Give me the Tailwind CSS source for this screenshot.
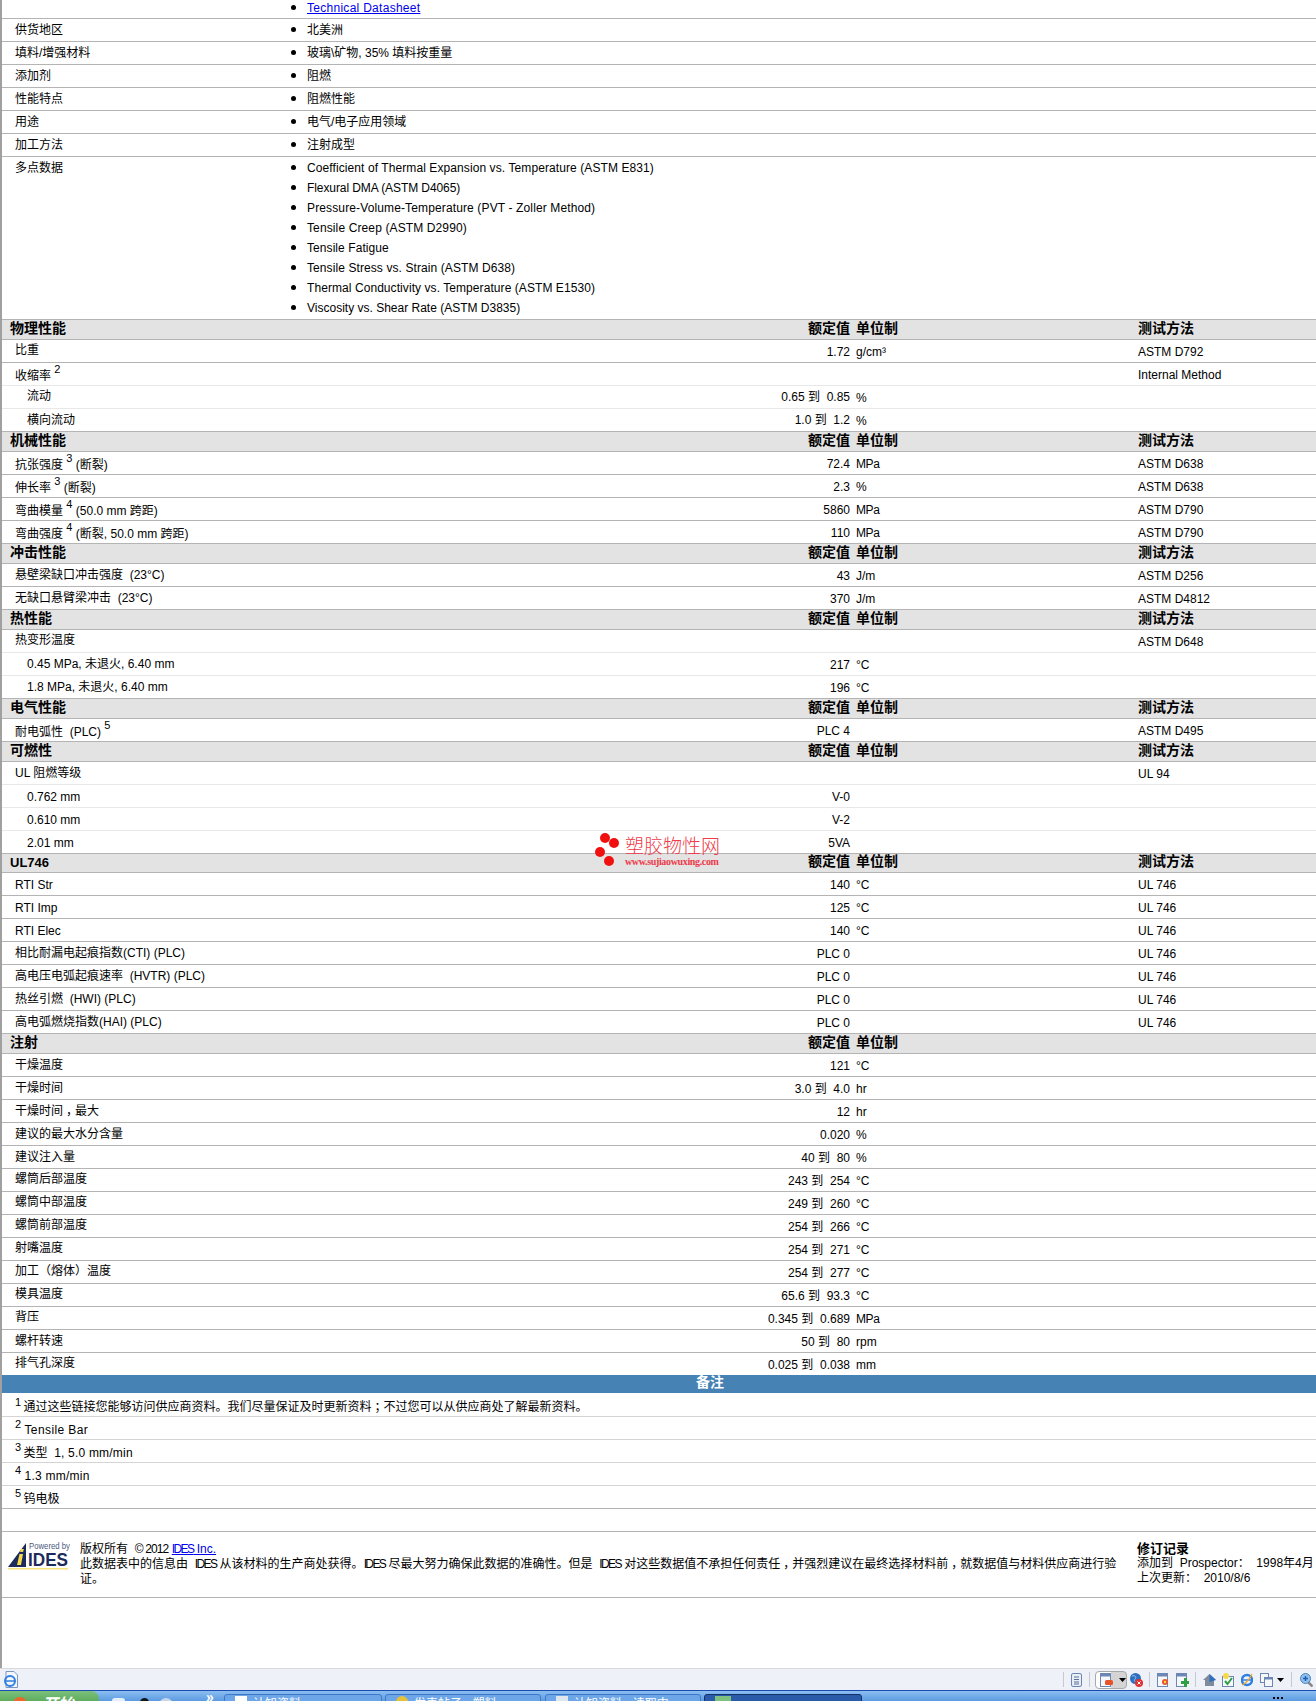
<!DOCTYPE html>
<html lang="zh">
<head>
<meta charset="utf-8">
<title>Datasheet</title>
<script src="https://cdn.jsdelivr.net/npm/@tailwindcss/browser@4"></script>
</head>
<body class="bg-white">
<div class="relative h-[1701px] w-[1316px] overflow-hidden bg-white font-['Liberation_Sans','Noto_Sans_CJK_SC',sans-serif] text-[12px] leading-[16px] text-black">
  <div class="h-[1668px] overflow-hidden border-l-2 border-[#a0a0a0]">
    <div class="w-[1416px]">
      <!-- info rows -->
      <div class="grid h-[19px] grid-cols-[290px_1fr] border-b border-[#b4b4b4]"><div></div><ul class="-mt-[1px] list-disc pl-[15px] marker:text-[15px]"><li><a class="text-[#0000ee] underline tracking-[0.28px]">Technical Datasheet</a></li></ul></div>
      <div class="grid h-[23px] grid-cols-[290px_1fr] border-b border-[#b4b4b4]"><div class="pl-[13px] pt-[3px]">供货地区</div><ul class="list-disc pl-[15px] pt-[2px] marker:text-[15px]"><li>北美洲</li></ul></div>
      <div class="grid h-[23px] grid-cols-[290px_1fr] border-b border-[#b4b4b4]"><div class="pl-[13px] pt-[3px]">填料/增强材料</div><ul class="list-disc pl-[15px] pt-[2px] marker:text-[15px]"><li>玻璃\矿物, 35% 填料按重量</li></ul></div>
      <div class="grid h-[23px] grid-cols-[290px_1fr] border-b border-[#b4b4b4]"><div class="pl-[13px] pt-[3px]">添加剂</div><ul class="list-disc pl-[15px] pt-[2px] marker:text-[15px]"><li>阻燃</li></ul></div>
      <div class="grid h-[23px] grid-cols-[290px_1fr] border-b border-[#b4b4b4]"><div class="pl-[13px] pt-[3px]">性能特点</div><ul class="list-disc pl-[15px] pt-[2px] marker:text-[15px]"><li>阻燃性能</li></ul></div>
      <div class="grid h-[23px] grid-cols-[290px_1fr] border-b border-[#b4b4b4]"><div class="pl-[13px] pt-[3px]">用途</div><ul class="list-disc pl-[15px] pt-[2px] marker:text-[15px]"><li>电气/电子应用领域</li></ul></div>
      <div class="grid h-[23px] grid-cols-[290px_1fr] border-b border-[#b4b4b4]"><div class="pl-[13px] pt-[3px]">加工方法</div><ul class="list-disc pl-[15px] pt-[2px] marker:text-[15px]"><li>注射成型</li></ul></div>
      <div class="grid h-[163px] grid-cols-[290px_1fr] border-b border-[#b4b4b4]"><div class="pl-[13px] pt-[3px]">多点数据</div>
        <ul class="list-disc pl-[15px] leading-[20px] marker:text-[15px]">
          <li class="h-[20px] tracking-[0.09px]">Coefficient of Thermal Expansion vs. Temperature (ASTM E831)</li>
          <li class="h-[20px] tracking-[-0.09px]">Flexural DMA (ASTM D4065)</li>
          <li class="h-[20px] tracking-[0.13px]">Pressure-Volume-Temperature (PVT - Zoller Method)</li>
          <li class="h-[20px] tracking-[0.12px]">Tensile Creep (ASTM D2990)</li>
          <li class="h-[20px] tracking-[0.07px]">Tensile Fatigue</li>
          <li class="h-[20px] tracking-[0.09px]">Tensile Stress vs. Strain (ASTM D638)</li>
          <li class="h-[20px] tracking-[0.07px]">Thermal Conductivity vs. Temperature (ASTM E1530)</li>
          <li class="h-[20px]">Viscosity vs. Shear Rate (ASTM D3835)</li>
        </ul>
      </div>

      <!-- 物理性能 -->
      <div class="grid h-[20px] grid-cols-[290px_558px_288px_1fr] border-b border-[#b4b4b4] bg-[#e3e3e3] text-[14px] font-bold"><div class="pl-[8px]">物理性能</div><div class="text-right">额定值</div><div class="pl-[6px]">单位制</div><div>测试方法</div></div>
      <div class="grid h-[23px] grid-cols-[290px_558px_288px_1fr] border-b border-[#b4b4b4]"><div class="pl-[13px] pt-[2px]">比重</div><div class="pt-[4px] text-right">1.72</div><div class="pl-[6px] pt-[4px]">g/cm³</div><div class="pt-[4px]">ASTM D792</div></div>
      <div class="grid h-[23px] grid-cols-[290px_558px_288px_1fr] border-b border-[#e8e8e8]"><div class="pl-[13px] pt-[5px]">收缩率 <sup class="top-[-7px] text-[11px]">2</sup></div><div></div><div></div><div class="pt-[4px]">Internal Method</div></div>
      <div class="grid h-[23px] grid-cols-[290px_558px_288px_1fr] border-b border-[#e8e8e8]"><div class="pl-[25px] pt-[2px]">流动</div><div class="pt-[3px] text-right">0.65 到&nbsp; 0.85</div><div class="pl-[6px] pt-[4px]">%</div><div></div></div>
      <div class="grid h-[23px] grid-cols-[290px_558px_288px_1fr] border-b border-[#b4b4b4]"><div class="pl-[25px] pt-[3px]">横向流动</div><div class="pt-[3px] text-right">1.0 到&nbsp; 1.2</div><div class="pl-[6px] pt-[4px]">%</div><div></div></div>

      <!-- 机械性能 -->
      <div class="grid h-[20px] grid-cols-[290px_558px_288px_1fr] border-b border-[#b4b4b4] bg-[#e3e3e3] text-[14px] font-bold"><div class="pl-[8px]">机械性能</div><div class="text-right">额定值</div><div class="pl-[6px]">单位制</div><div>测试方法</div></div>
      <div class="grid h-[23px] grid-cols-[290px_558px_288px_1fr] border-b border-[#b4b4b4]"><div class="pl-[13px] pt-[5px]">抗张强度 <sup class="top-[-7px] text-[11px]">3</sup> (断裂)</div><div class="pt-[4px] text-right">72.4</div><div class="pl-[6px] pt-[4px] tracking-[-0.4px]">MPa</div><div class="pt-[4px]">ASTM D638</div></div>
      <div class="grid h-[23px] grid-cols-[290px_558px_288px_1fr] border-b border-[#b4b4b4]"><div class="pl-[13px] pt-[5px]">伸长率 <sup class="top-[-7px] text-[11px]">3</sup> (断裂)</div><div class="pt-[4px] text-right">2.3</div><div class="pl-[6px] pt-[4px]">%</div><div class="pt-[4px]">ASTM D638</div></div>
      <div class="grid h-[23px] grid-cols-[290px_558px_288px_1fr] border-b border-[#b4b4b4]"><div class="pl-[13px] pt-[5px]">弯曲模量 <sup class="top-[-7px] text-[11px]">4</sup> (50.0 mm 跨距)</div><div class="pt-[4px] text-right">5860</div><div class="pl-[6px] pt-[4px] tracking-[-0.4px]">MPa</div><div class="pt-[4px]">ASTM D790</div></div>
      <div class="grid h-[23px] grid-cols-[290px_558px_288px_1fr] border-b border-[#b4b4b4]"><div class="pl-[13px] pt-[5px]">弯曲强度 <sup class="top-[-7px] text-[11px]">4</sup> (断裂, 50.0 mm 跨距)</div><div class="pt-[4px] text-right">110</div><div class="pl-[6px] pt-[4px] tracking-[-0.4px]">MPa</div><div class="pt-[4px]">ASTM D790</div></div>

      <!-- 冲击性能 -->
      <div class="grid h-[20px] grid-cols-[290px_558px_288px_1fr] border-b border-[#b4b4b4] bg-[#e3e3e3] text-[14px] font-bold"><div class="pl-[8px]">冲击性能</div><div class="text-right">额定值</div><div class="pl-[6px]">单位制</div><div>测试方法</div></div>
      <div class="grid h-[23px] grid-cols-[290px_558px_288px_1fr] border-b border-[#b4b4b4]"><div class="pl-[13px] pt-[3px]">悬壁梁缺口冲击强度&nbsp; (23°C)</div><div class="pt-[4px] text-right">43</div><div class="pl-[6px] pt-[4px]">J/m</div><div class="pt-[4px]">ASTM D256</div></div>
      <div class="grid h-[23px] grid-cols-[290px_558px_288px_1fr] border-b border-[#b4b4b4]"><div class="pl-[13px] pt-[3px]">无缺口悬臂梁冲击&nbsp; (23°C)</div><div class="pt-[4px] text-right">370</div><div class="pl-[6px] pt-[4px]">J/m</div><div class="pt-[4px]">ASTM D4812</div></div>

      <!-- 热性能 -->
      <div class="grid h-[20px] grid-cols-[290px_558px_288px_1fr] border-b border-[#b4b4b4] bg-[#e3e3e3] text-[14px] font-bold"><div class="pl-[8px]">热性能</div><div class="text-right">额定值</div><div class="pl-[6px]">单位制</div><div>测试方法</div></div>
      <div class="grid h-[23px] grid-cols-[290px_558px_288px_1fr] border-b border-[#e8e8e8]"><div class="pl-[13px] pt-[2px]">热变形温度</div><div></div><div></div><div class="pt-[4px]">ASTM D648</div></div>
      <div class="grid h-[23px] grid-cols-[290px_558px_288px_1fr] border-b border-[#e8e8e8]"><div class="pl-[25px] pt-[3px]">0.45 MPa, 未退火, 6.40 mm</div><div class="pt-[4px] text-right">217</div><div class="pl-[6px] pt-[4px]">°C</div><div></div></div>
      <div class="grid h-[23px] grid-cols-[290px_558px_288px_1fr] border-b border-[#b4b4b4]"><div class="pl-[25px] pt-[3px]">1.8 MPa, 未退火, 6.40 mm</div><div class="pt-[4px] text-right">196</div><div class="pl-[6px] pt-[4px]">°C</div><div></div></div>

      <!-- 电气性能 -->
      <div class="grid h-[20px] grid-cols-[290px_558px_288px_1fr] border-b border-[#b4b4b4] bg-[#e3e3e3] text-[14px] font-bold"><div class="pl-[8px]">电气性能</div><div class="text-right">额定值</div><div class="pl-[6px]">单位制</div><div>测试方法</div></div>
      <div class="grid h-[23px] grid-cols-[290px_558px_288px_1fr] border-b border-[#b4b4b4]"><div class="pl-[13px] pt-[5px]">耐电弧性&nbsp; (PLC) <sup class="top-[-7px] text-[11px]">5</sup></div><div class="pt-[4px] text-right">PLC 4</div><div></div><div class="pt-[4px]">ASTM D495</div></div>

      <!-- 可燃性 -->
      <div class="grid h-[20px] grid-cols-[290px_558px_288px_1fr] border-b border-[#b4b4b4] bg-[#e3e3e3] text-[14px] font-bold"><div class="pl-[8px]">可燃性</div><div class="text-right">额定值</div><div class="pl-[6px]">单位制</div><div>测试方法</div></div>
      <div class="grid h-[23px] grid-cols-[290px_558px_288px_1fr] border-b border-[#e8e8e8]"><div class="pl-[13px] pt-[3px]">UL 阻燃等级</div><div></div><div></div><div class="pt-[4px]">UL 94</div></div>
      <div class="grid h-[23px] grid-cols-[290px_558px_288px_1fr] border-b border-[#e8e8e8]"><div class="pl-[25px] pt-[4px]">0.762 mm</div><div class="pt-[4px] text-right">V-0</div><div></div><div></div></div>
      <div class="grid h-[23px] grid-cols-[290px_558px_288px_1fr] border-b border-[#e8e8e8]"><div class="pl-[25px] pt-[4px]">0.610 mm</div><div class="pt-[4px] text-right">V-2</div><div></div><div></div></div>
      <div class="grid h-[23px] grid-cols-[290px_558px_288px_1fr] border-b border-[#b4b4b4]"><div class="pl-[25px] pt-[4px]">2.01 mm</div><div class="pt-[4px] text-right">5VA</div><div></div><div></div></div>

      <!-- UL746 -->
      <div class="grid h-[19px] grid-cols-[290px_558px_288px_1fr] border-b border-[#b4b4b4] bg-[#e3e3e3] text-[14px] font-bold leading-[14px]"><div class="pl-[8px] pt-[2px] text-[13px]">UL746</div><div class="text-right">额定值</div><div class="pl-[6px]">单位制</div><div>测试方法</div></div>
      <div class="grid h-[23px] grid-cols-[290px_558px_288px_1fr] border-b border-[#b4b4b4]"><div class="pl-[13px] pt-[4px]">RTI Str</div><div class="pt-[4px] text-right">140</div><div class="pl-[6px] pt-[4px]">°C</div><div class="pt-[4px]">UL 746</div></div>
      <div class="grid h-[23px] grid-cols-[290px_558px_288px_1fr] border-b border-[#b4b4b4]"><div class="pl-[13px] pt-[4px]">RTI Imp</div><div class="pt-[4px] text-right">125</div><div class="pl-[6px] pt-[4px]">°C</div><div class="pt-[4px]">UL 746</div></div>
      <div class="grid h-[23px] grid-cols-[290px_558px_288px_1fr] border-b border-[#b4b4b4]"><div class="pl-[13px] pt-[4px]">RTI Elec</div><div class="pt-[4px] text-right">140</div><div class="pl-[6px] pt-[4px]">°C</div><div class="pt-[4px]">UL 746</div></div>
      <div class="grid h-[23px] grid-cols-[290px_558px_288px_1fr] border-b border-[#b4b4b4]"><div class="pl-[13px] pt-[3px]">相比耐漏电起痕指数(CTI) (PLC)</div><div class="pt-[4px] text-right">PLC 0</div><div></div><div class="pt-[4px]">UL 746</div></div>
      <div class="grid h-[23px] grid-cols-[290px_558px_288px_1fr] border-b border-[#b4b4b4]"><div class="pl-[13px] pt-[3px]">高电压电弧起痕速率&nbsp; (HVTR) (PLC)</div><div class="pt-[4px] text-right">PLC 0</div><div></div><div class="pt-[4px]">UL 746</div></div>
      <div class="grid h-[23px] grid-cols-[290px_558px_288px_1fr] border-b border-[#b4b4b4]"><div class="pl-[13px] pt-[3px]">热丝引燃&nbsp; (HWI) (PLC)</div><div class="pt-[4px] text-right">PLC 0</div><div></div><div class="pt-[4px]">UL 746</div></div>
      <div class="grid h-[23px] grid-cols-[290px_558px_288px_1fr] border-b border-[#b4b4b4]"><div class="pl-[13px] pt-[3px]">高电弧燃烧指数(HAI) (PLC)</div><div class="pt-[4px] text-right">PLC 0</div><div></div><div class="pt-[4px]">UL 746</div></div>

      <!-- 注射 -->
      <div class="grid h-[20px] grid-cols-[290px_558px_288px_1fr] border-b border-[#b4b4b4] bg-[#e3e3e3] text-[14px] font-bold"><div class="pl-[8px]">注射</div><div class="text-right">额定值</div><div class="pl-[6px]">单位制</div><div></div></div>
      <div class="grid h-[23px] grid-cols-[290px_558px_288px_1fr] border-b border-[#b4b4b4]"><div class="pl-[13px] pt-[3px]">干燥温度</div><div class="pt-[4px] text-right">121</div><div class="pl-[6px] pt-[4px]">°C</div><div></div></div>
      <div class="grid h-[23px] grid-cols-[290px_558px_288px_1fr] border-b border-[#b4b4b4]"><div class="pl-[13px] pt-[3px]">干燥时间</div><div class="pt-[4px] text-right">3.0 到&nbsp; 4.0</div><div class="pl-[6px] pt-[4px]">hr</div><div></div></div>
      <div class="grid h-[23px] grid-cols-[290px_558px_288px_1fr] border-b border-[#b4b4b4]"><div class="pl-[13px] pt-[3px]">干燥时间<span class="relative left-[3px]">，</span>最大</div><div class="pt-[4px] text-right">12</div><div class="pl-[6px] pt-[4px]">hr</div><div></div></div>
      <div class="grid h-[23px] grid-cols-[290px_558px_288px_1fr] border-b border-[#b4b4b4]"><div class="pl-[13px] pt-[3px]">建议的最大水分含量</div><div class="pt-[4px] text-right">0.020</div><div class="pl-[6px] pt-[4px]">%</div><div></div></div>
      <div class="grid h-[23px] grid-cols-[290px_558px_288px_1fr] border-b border-[#b4b4b4]"><div class="pl-[13px] pt-[3px]">建议注入量</div><div class="pt-[4px] text-right">40 到&nbsp; 80</div><div class="pl-[6px] pt-[4px]">%</div><div></div></div>
      <div class="grid h-[23px] grid-cols-[290px_558px_288px_1fr] border-b border-[#b4b4b4]"><div class="pl-[13px] pt-[2px]">螺筒后部温度</div><div class="pt-[4px] text-right">243 到&nbsp; 254</div><div class="pl-[6px] pt-[4px]">°C</div><div></div></div>
      <div class="grid h-[23px] grid-cols-[290px_558px_288px_1fr] border-b border-[#b4b4b4]"><div class="pl-[13px] pt-[2px]">螺筒中部温度</div><div class="pt-[4px] text-right">249 到&nbsp; 260</div><div class="pl-[6px] pt-[4px]">°C</div><div></div></div>
      <div class="grid h-[23px] grid-cols-[290px_558px_288px_1fr] border-b border-[#b4b4b4]"><div class="pl-[13px] pt-[2px]">螺筒前部温度</div><div class="pt-[4px] text-right">254 到&nbsp; 266</div><div class="pl-[6px] pt-[4px]">°C</div><div></div></div>
      <div class="grid h-[23px] grid-cols-[290px_558px_288px_1fr] border-b border-[#b4b4b4]"><div class="pl-[13px] pt-[2px]">射嘴温度</div><div class="pt-[4px] text-right">254 到&nbsp; 271</div><div class="pl-[6px] pt-[4px]">°C</div><div></div></div>
      <div class="grid h-[23px] grid-cols-[290px_558px_288px_1fr] border-b border-[#b4b4b4]"><div class="pl-[13px] pt-[2px]">加工（熔体）温度</div><div class="pt-[4px] text-right">254 到&nbsp; 277</div><div class="pl-[6px] pt-[4px]">°C</div><div></div></div>
      <div class="grid h-[23px] grid-cols-[290px_558px_288px_1fr] border-b border-[#b4b4b4]"><div class="pl-[13px] pt-[2px]">模具温度</div><div class="pt-[4px] text-right">65.6 到&nbsp; 93.3</div><div class="pl-[6px] pt-[4px]">°C</div><div></div></div>
      <div class="grid h-[23px] grid-cols-[290px_558px_288px_1fr] border-b border-[#b4b4b4]"><div class="pl-[13px] pt-[2px]">背压</div><div class="pt-[4px] text-right">0.345 到&nbsp; 0.689</div><div class="pl-[6px] pt-[4px] tracking-[-0.4px]">MPa</div><div></div></div>
      <div class="grid h-[23px] grid-cols-[290px_558px_288px_1fr] border-b border-[#b4b4b4]"><div class="pl-[13px] pt-[3px]">螺杆转速</div><div class="pt-[4px] text-right">50 到&nbsp; 80</div><div class="pl-[6px] pt-[4px]">rpm</div><div></div></div>
      <div class="grid h-[22px] grid-cols-[290px_558px_288px_1fr]"><div class="pl-[13px] pt-[2px]">排气孔深度</div><div class="pt-[4px] text-right">0.025 到&nbsp; 0.038</div><div class="pl-[6px] pt-[4px]">mm</div><div></div></div>

      <!-- 备注 -->
      <div class="h-[18px] bg-[#4682b4] text-center text-[14px] font-bold leading-[15px] text-white">备注</div>
      <div class="h-[24px] border-b border-[#d4d4d4] pl-[13px] pt-[6px]"><sup class="top-[-5px] mr-[-1px] text-[11px]">1</sup> 通过这些链接您能够访问供应商资料。我们尽量保证及时更新资料<span class="relative left-[3px]">；</span>不过您可以从供应商处了解最新资料。</div>
      <div class="h-[23px] border-b border-[#d4d4d4] pl-[13px] pt-[5px]"><sup class="top-[-6px] text-[11px]">2</sup> <span class="tracking-[0.4px]">Tensile Bar</span></div>
      <div class="h-[23px] border-b border-[#d4d4d4] pl-[13px] pt-[5px]"><sup class="top-[-6px] mr-[-1px] text-[11px]">3</sup> 类型&nbsp; <span class="tracking-[0.2px]">1, 5.0 mm/min</span></div>
      <div class="h-[23px] border-b border-[#d4d4d4] pl-[13px] pt-[5px]"><sup class="top-[-6px] text-[11px]">4</sup> <span class="tracking-[0.25px]">1.3 mm/min</span></div>
      <div class="h-[23px] border-b border-[#b4b4b4] pl-[13px] pt-[5px]"><sup class="top-[-6px] mr-[-1px] text-[11px]">5</sup> 钨电极</div>
      <div class="h-[23px] border-b border-[#b4b4b4]"></div>

      <!-- footer -->
      <div class="flex h-[66px] border-b border-[#b4b4b4] leading-[15px]">
        <div class="w-[78px] shrink-0 pl-[6px] pt-[10px]">
          <svg width="62" height="28" viewBox="0 0 62 28" class="block">
            <path d="M18 1 L0 25 L18 25 Z" fill="#1d2a5c"/>
            <path d="M13 7 L16 7 L15 10 L12 10 Z M11.500 12 L15 12 L13 23 L9 23 Z" fill="#f5d949"/>
            <rect x="0" y="26" width="60" height="1.500" fill="#f8e27a"/>
            <text x="21" y="7" font-family="Liberation Sans" font-size="8.500" textLength="41" lengthAdjust="spacingAndGlyphs" fill="#4b5a80">Powered by</text>
            <text x="20" y="24" font-family="Liberation Sans" font-size="18" font-weight="700" textLength="40" lengthAdjust="spacingAndGlyphs" fill="#1d2a5c">IDES</text>
          </svg>
        </div>
        <div class="w-[1057px] shrink-0 whitespace-nowrap pt-[10px]">版权所有 &nbsp;<span class="tracking-[-0.85px]">© 2012</span> <a class="text-[#0000ee] underline"><span class="tracking-[-1.6px]">IDES</span> Inc.</a><br>此数据表中的信息由&nbsp; <span class="tracking-[-1.6px]">IDES</span> 从该材料的生产商处获得。<span class="tracking-[-1.6px]">IDES</span> 尽最大努力确保此数据的准确性。但是&nbsp; <span class="tracking-[-1.6px]">IDES</span> 对这些数据值不承担任何责任<span class="relative left-[3px]">，</span>并强烈建议在最终选择材料前<span class="relative left-[3px]">，</span>就数据值与材料供应商进行验<br>证。</div>
        <div class="whitespace-nowrap pt-[9px]"><div class="text-[13px] font-bold">修订记录</div>添加到&nbsp; Prospector：&nbsp; 1998年4月<br>上次更新：&nbsp; 2010/8/6</div>
      </div>
    </div>
  </div>

  <!-- watermark -->
  <div class="absolute left-[595px] top-[832px] h-[36px] w-[130px]">
    <span class="absolute left-[5px] top-[1px] h-[10px] w-[10px] rounded-full bg-[#f01010]"></span>
    <span class="absolute left-[14px] top-[6px] h-[10px] w-[10px] rounded-full bg-[#f01010]"></span>
    <span class="absolute left-0 top-[15px] h-[10px] w-[10px] rounded-full bg-[#f01010]"></span>
    <span class="absolute left-[9px] top-[24px] h-[10px] w-[10px] rounded-full bg-[#f01010]"></span>
    <span class="absolute left-[30px] top-[3px] whitespace-nowrap text-[19px] font-light leading-[24px] text-[#ee3a4a]">塑胶物性网</span>
    <span class="absolute left-[30px] top-[25px] whitespace-nowrap font-['Liberation_Serif',serif] text-[10px] font-bold leading-[10px] tracking-[-0.35px] text-[#ee3a4a]">www.sujiaowuxing.com</span>
  </div>

  <!-- status bar -->
  <div class="flex h-[22px] items-center justify-between border-t border-[#d6d8de] bg-[#eff1f8] pl-[3px]">
    <svg width="15" height="17" viewBox="0 0 15 17"><path d="M3 0.500 H11 L14.500 4 V16.500 H3 Z" fill="#f4f7fb" stroke="#7b97c0"/><circle cx="7" cy="10" r="5" fill="none" stroke="#2f80e0" stroke-width="2"/><path d="M2 10 H12" stroke="#2f80e0" stroke-width="1.500"/></svg>
    <div class="flex h-full items-center">
      <span class="h-[15px] w-px bg-[#c6c8d0]"></span>
      <svg class="ml-[7px]" width="11" height="14" viewBox="0 0 11 14"><rect x="0.500" y="0.500" width="10" height="13" rx="1.500" fill="#e8eef8" stroke="#6c87b5"/><path d="M3 4 H8 M3 6.500 H8 M3 9 H8 M3 11 H8" stroke="#5a6f95"/></svg>
      <span class="ml-[7px] h-[15px] w-px bg-[#c6c8d0]"></span>
      <div class="ml-[5px] flex h-[18px] w-[32px] items-center rounded-[4px] border border-[#a8a8a8] bg-gradient-to-r from-white from-50% to-[#d4d4d4] to-50%">
        <svg class="ml-[4px]" width="13" height="14" viewBox="0 0 13 14"><rect x="0.500" y="0.500" width="10" height="13" fill="#f6f8fc" stroke="#6c87b5"/><rect x="0.500" y="0.500" width="10" height="3" fill="#6c87b5"/><rect x="5" y="7" width="8" height="5" rx="1.500" fill="#e9532a"/></svg>
        <svg class="ml-[6px]" width="7" height="4" viewBox="0 0 7 4"><path d="M0 0 H7 L3.500 4 Z" fill="#000"/></svg>
      </div>
      <svg class="ml-[3px]" width="13" height="14" viewBox="0 0 13 14"><circle cx="5.500" cy="5.500" r="5.500" fill="#2f6fc0"/><path d="M2 3 C5 2 7 4 5 6 C3 8 6 10 8 9" fill="none" stroke="#9cc7ee"/><circle cx="9" cy="10" r="4" fill="#e03232"/><path d="M7.500 8.500 L10.500 11.500 M10.500 8.500 L7.500 11.500" stroke="#fff"/></svg>
      <span class="ml-[6px] h-[15px] w-px bg-[#c6c8d0]"></span>
      <svg class="ml-[7px]" width="13" height="14" viewBox="0 0 13 14"><rect x="0.500" y="0.500" width="10" height="13" fill="#f6f8fc" stroke="#6c87b5"/><rect x="0.500" y="0.500" width="10" height="3" fill="#6c87b5"/><circle cx="8" cy="9" r="3" fill="#e9532a"/><circle cx="8" cy="9" r="1.200" fill="#f8d44c"/></svg>
      <svg class="ml-[6px]" width="13" height="14" viewBox="0 0 13 14"><rect x="0.500" y="0.500" width="10" height="13" fill="#f6f8fc" stroke="#6c87b5"/><rect x="0.500" y="0.500" width="10" height="3" fill="#6c87b5"/><path d="M8 5 H11 V8 H13 V11 H11 V14 H8 V11 H5 V8 H8 Z" fill="#2f9e44"/></svg>
      <span class="ml-[6px] h-[15px] w-px bg-[#c6c8d0]"></span>
      <svg class="ml-[7px]" width="13" height="14" viewBox="0 0 13 14"><path d="M6.500 1 L13 7 L11 7 V13 H2 V7 L0 7 Z" fill="#7f8a9c"/><path d="M6.500 1 L13 7 L6.500 9 Z" fill="#2f6fc0"/></svg>
      <svg class="ml-[6px]" width="13" height="14" viewBox="0 0 13 14"><rect x="0.500" y="3.500" width="11" height="10" fill="#f6f8fc" stroke="#6c87b5"/><circle cx="4" cy="3" r="3" fill="#f5d949"/><path d="M3 8 L5.500 11 L10 5" fill="none" stroke="#2f9e44" stroke-width="2"/></svg>
      <svg class="ml-[6px]" width="12" height="14" viewBox="0 0 12 14"><circle cx="6" cy="7" r="5" fill="none" stroke="#2f80e0" stroke-width="2.500"/><path d="M2 7 H10" stroke="#2f80e0" stroke-width="1.500"/><path d="M1 12 C4 11 9 6 11 1" fill="none" stroke="#f0a52c" stroke-width="1.200"/></svg>
      <svg class="ml-[7px]" width="13" height="14" viewBox="0 0 13 14"><rect x="0.500" y="0.500" width="8" height="9" fill="#f6f8fc" stroke="#6c87b5"/><rect x="4.500" y="4.500" width="8" height="9" fill="#f6f8fc" stroke="#6c87b5"/><rect x="4.500" y="4.500" width="8" height="2" fill="#6c87b5"/></svg>
      <svg class="ml-[4px]" width="7" height="4" viewBox="0 0 7 4"><path d="M0 0 H7 L3.500 4 Z" fill="#000"/></svg>
      <span class="ml-[7px] h-[15px] w-px bg-[#c6c8d0]"></span>
      <svg class="ml-[8px] mr-[3px]" width="13" height="14" viewBox="0 0 13 14"><path d="M8 9 L12.500 13.500" stroke="#888" stroke-width="2.500"/><circle cx="5.500" cy="5.500" r="5" fill="#8fc0ee" stroke="#4a80c0"/><path d="M3 5.500 H8 M5.500 3 V8" stroke="#1f5fb0" stroke-width="1.500"/></svg>
    </div>
  </div>

  <!-- taskbar -->
  <div class="flex h-[11px] overflow-hidden border-t border-[#1c4bb0] bg-gradient-to-b from-[#8cbdf0] to-[#5b9be2] pl-0 text-white">
    <div class="relative h-[20px] w-[99px] shrink-0 rounded-tr-[8px] bg-gradient-to-b from-[#7cc07c] to-[#3f9a3f]">
      <span class="absolute left-[13px] top-[6px] h-[14px] w-[14px] rounded-full bg-[#e8692a]"></span>
      <span class="absolute left-[42px] top-[5px] whitespace-nowrap text-[16px] font-bold italic leading-[18px]">开始</span>
    </div>
    <span class="ml-[13px] mt-[7px] h-[14px] w-[13px] shrink-0 rounded-[3px] bg-[#e6f0fb]"></span>
    <span class="ml-[15px] mt-[7px] h-[10px] w-[9px] shrink-0 rounded-full bg-[#151515]"></span>
    <span class="ml-[10px] mt-[7px] h-[14px] w-[14px] shrink-0 rounded-full bg-[#c8d8ea]"></span>
    <span class="ml-[33px] mt-[-2px] w-[12px] shrink-0 text-[14px] font-bold">»</span>
    <div class="ml-[6px] mt-[3px] flex h-[20px] w-[158px] shrink-0 gap-[6px] rounded-t-[3px] border border-[#3f78c8] bg-[#6ca6e8] pl-[10px] leading-[18px]"><span class="mt-[1px] h-[14px] w-[12px] bg-white"></span>认知资料</div>
    <div class="ml-[3px] mt-[3px] flex h-[20px] w-[156px] shrink-0 gap-[6px] rounded-t-[3px] border border-[#3f78c8] bg-[#6ca6e8] pl-[10px] leading-[18px]"><span class="mt-[1px] h-[14px] w-[12px] rounded-full bg-[#e6c23a]"></span>发表帖子 - 塑料</div>
    <div class="ml-[4px] mt-[3px] flex h-[20px] w-[156px] shrink-0 gap-[6px] rounded-t-[3px] border border-[#3f78c8] bg-[#6ca6e8] pl-[10px] leading-[18px]"><span class="mt-[1px] h-[14px] w-[12px] bg-[#dfe6ee]"></span>认知资料 - 读取中</div>
    <div class="ml-[3px] mt-[3px] flex h-[20px] w-[158px] shrink-0 rounded-t-[3px] border border-[#16306e] bg-[#2a5aa8] pl-[10px]"><span class="mt-[1px] h-[14px] w-[16px] bg-[#7fc27f]"></span></div>
    <span class="absolute left-[1273px] top-[1697px] h-[4px] w-[10px] border-t-2 border-dotted border-black"></span>
  </div>
</div>
</body>
</html>
